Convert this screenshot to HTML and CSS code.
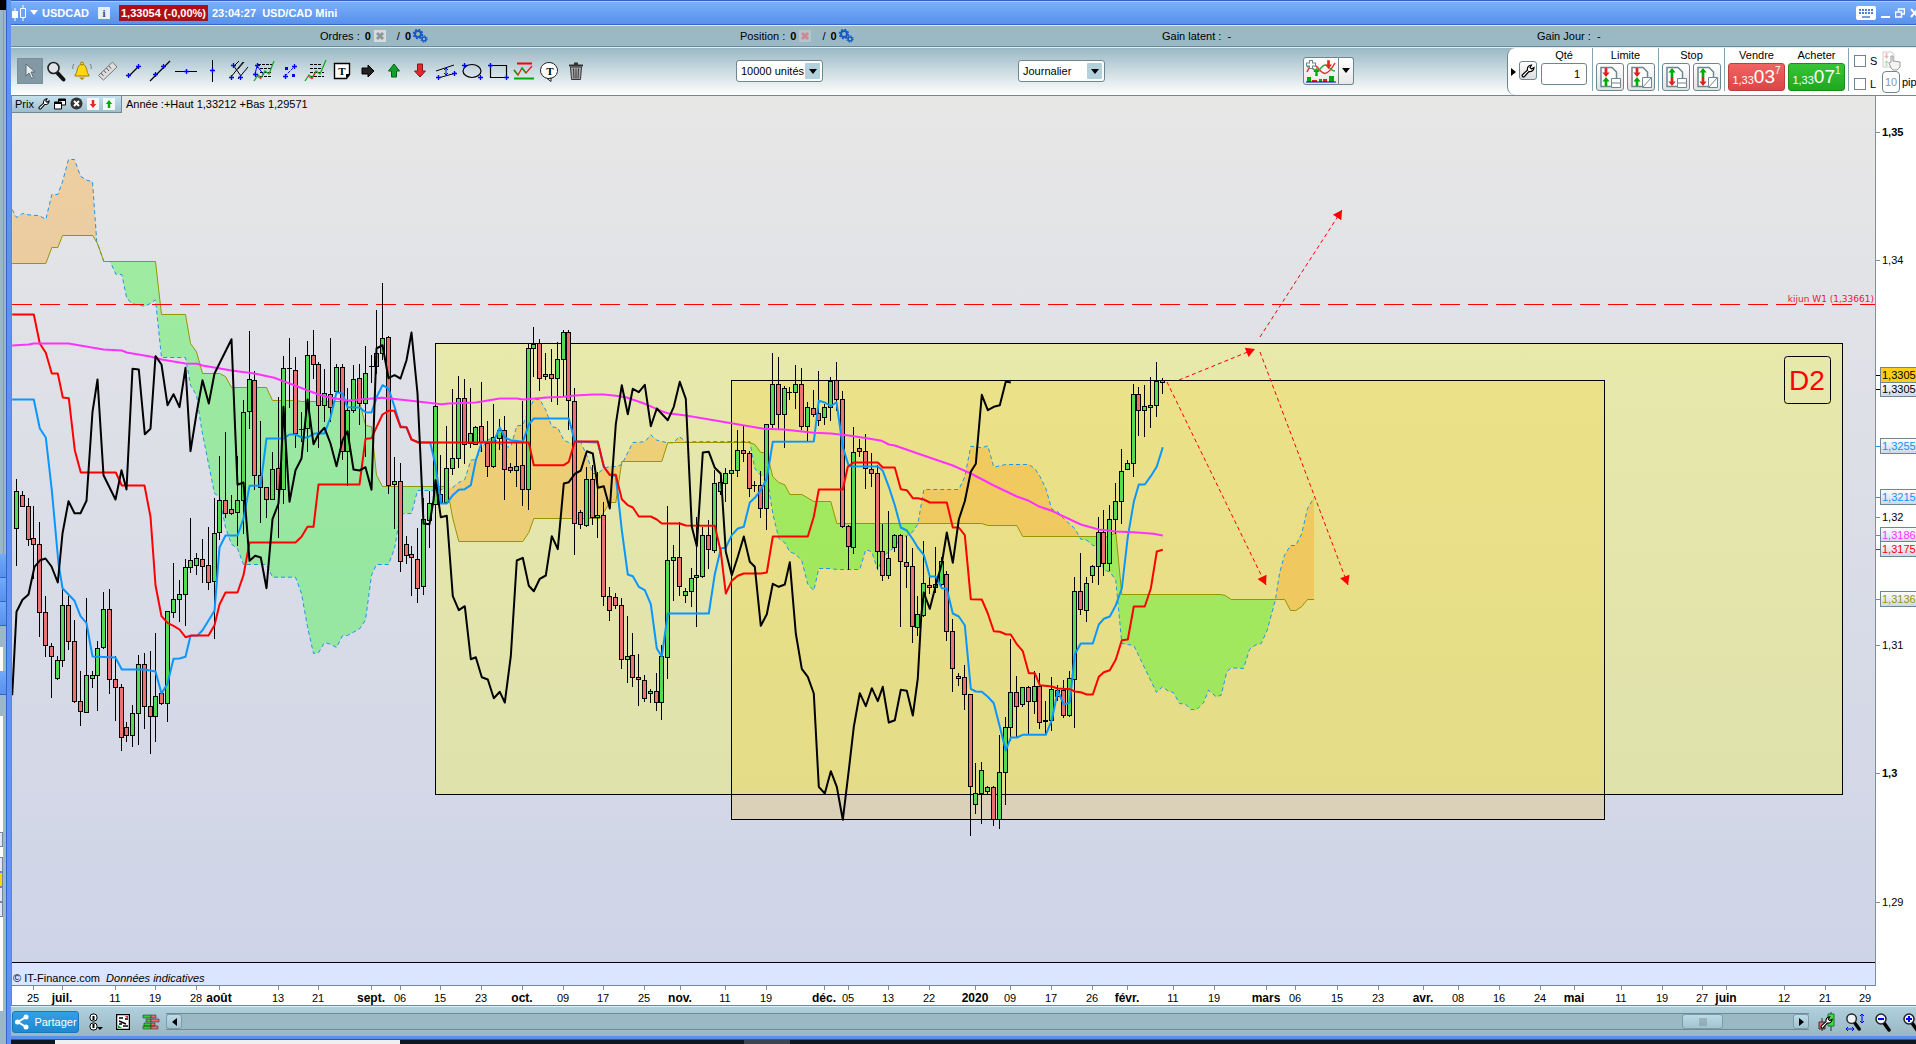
FILE: index.html
```html
<!DOCTYPE html>
<html lang="fr">
<head>
<meta charset="utf-8">
<title>USDCAD - USD/CAD Mini</title>
<link rel="stylesheet" href="styles.css">
</head>
<body>
<svg class="defs" aria-hidden="true">
  <symbol id="plus" viewBox="0 0 6 6"><path d="M3 0V6M0 3H6" stroke="#00f" stroke-width="1.600"/></symbol>
  <symbol id="gears" viewBox="0 0 16 14">
    <circle cx="6" cy="5" r="3" fill="none" stroke="#1557c4" stroke-width="2"/>
    <circle cx="6" cy="5" r="4.5" fill="none" stroke="#1557c4" stroke-width="1.5" stroke-dasharray="2 1.5"/>
    <circle cx="12" cy="10" r="2" fill="none" stroke="#1557c4" stroke-width="1.6"/>
    <circle cx="12" cy="10" r="3.2" fill="none" stroke="#1557c4" stroke-dasharray="1.4 1.1"/>
  </symbol>
  <symbol id="wrench" viewBox="0 0 14 14"><path d="M1.5 12.5c-1-1 0-1.800 0-1.800L6.500 6C6 3.500 7.500 1 10.500 1L9 3.500 10.500 5 13 3.500C13 6.500 10.500 8 8 7.500L3.500 12.500c0 0-1 1-2 0Z" fill="#fff" stroke="#000" stroke-width="1.200"/></symbol>
  <symbol id="page" viewBox="0 0 24 24"><path d="M3 2.500H14L18.500 7V21.500H3Z" fill="#fff" stroke="#6d868f" stroke-width="1.500"/></symbol>
  <symbol id="down" viewBox="0 0 8 10"><path d="M2.500 0h3v5H8L4 10 0 5h2.500Z"/></symbol>
  <symbol id="up" viewBox="0 0 8 10"><path d="M2.500 10h3V5H8L4 0 0 5h2.500Z"/></symbol>
  <symbol id="lens" viewBox="0 0 18 20"><path d="M10 11l5 7" stroke="#000" stroke-width="3.500" stroke-linecap="round"/><circle cx="7" cy="7" r="5" fill="#eef3f5" stroke="#222" stroke-width="1.500"/></symbol>
</svg>

<div class="screen">
  <aside class="neighbour">
    <i class="n-black"></i><i class="n-top"></i><i class="n-blue"></i><i class="n-blue"></i><i class="n-blue"></i>
    <i class="n-gap"></i><i class="n-white"></i><i class="n-blue"></i><i class="n-gap"></i><i class="n-long"></i>
    <i class="n-tag"></i><i class="n-space"></i><i class="n-tag"></i><i class="n-tag n-gold"></i><i class="n-tag"></i><i class="n-tag"></i><i class="n-end"></i>
  </aside>

  <main class="window">
    <header class="titlebar">
      <svg class="ico-candles" width="16" height="18" viewBox="0 0 16 18"><path d="M4 4v13M12 1v16" stroke="#fff"/><path d="M1 7h6v7H1z" fill="#fff"/><path d="M9.500 4.500h5v9h-5z" fill="#6ba3f8" stroke="#fff"/></svg>
      <svg width="8" height="5" viewBox="0 0 8 5"><path d="M0 0h8L4 5z" fill="#fff"/></svg>
      <h1>USDCAD</h1>
      <button class="info" aria-label="Informations">i</button>
      <span class="quote">1,33054 (-0,00%)</span>
      <span class="clock">23:04:27&nbsp; USD/CAD Mini</span>
      <span class="wincontrols">
        <button aria-label="Clavier"><svg width="20" height="14" viewBox="0 0 20 14"><rect width="20" height="14" rx="2" fill="#fff"/><path d="M3 4h14M3 7h14" stroke="#4a7fd8" stroke-width="2" stroke-dasharray="2 1"/><path d="M6 11h8" stroke="#4a7fd8" stroke-width="1.500"/></svg></button>
        <button aria-label="Réduire"><svg width="9" height="12" viewBox="0 0 9 12"><path d="M0 10h9" stroke="#fff" stroke-width="2"/></svg></button>
        <button aria-label="Restaurer"><svg width="10" height="12" viewBox="0 0 10 12"><path d="M3.500 4V2h6v5H7M.5 5h6v5h-6z" fill="none" stroke="#fff" stroke-width="1.500"/></svg></button>
        <button aria-label="Fermer"><svg width="9" height="10" viewBox="0 0 9 10"><path d="M1 1l7 8M8 1L1 9" stroke="#fff" stroke-width="2"/></svg></button>
      </span>
    </header>

    <section class="infobar">
      <div class="stat stat-first">Ordres : <b>0</b>
        <svg width="12" height="12" viewBox="0 0 12 12"><rect width="12" height="12" fill="#d4dcdf"/><path d="M3 3l6 6M9 3L3 9" stroke="#8f9698" stroke-width="3"/></svg>
        <span class="slash">/</span> <b>0</b><svg class="gears" width="16" height="14"><use href="#gears"/></svg></div>
      <div class="stat">Position : <b>0</b>
        <svg width="12" height="12" viewBox="0 0 12 12"><rect width="12" height="12" fill="#b5c5cd"/><path d="M3 3l6 6M9 3L3 9" stroke="#cf8790" stroke-width="3"/></svg>
        <span class="slash">/</span> <b>0</b><svg class="gears" width="16" height="14"><use href="#gears"/></svg></div>
      <div class="stat">Gain latent :&nbsp; -</div>
      <div class="stat">Gain Jour :&nbsp; -</div>
    </section>

    <section class="toolbar">
      <nav class="tools">
        <button class="active" aria-label="Pointeur"><svg width="24" height="24" viewBox="0 0 24 24"><path d="M8 5v12l3-3 2.500 5.500 2-1L13 13h4z" fill="#e8eef0" stroke="#5c6c73"/></svg></button>
        <button aria-label="Loupe"><svg width="24" height="24" viewBox="0 0 24 24"><path d="M13.500 14l6 6.500" stroke="#111" stroke-width="4" stroke-linecap="round"/><circle cx="9.500" cy="9" r="5.500" fill="#dfe5e8" stroke="#222" stroke-width="1.600"/></svg></button>
        <button aria-label="Alerte"><svg width="24" height="24" viewBox="0 0 24 24"><path d="M5 16c3-2 1-10 7-11 6 1 4 9 7 11v1H5z" fill="#ffd712" stroke="#a67a00"/><circle cx="12" cy="4.500" r="1.500" fill="#ffd712" stroke="#a67a00"/><path d="M9 18.500h6l-3 2.500z" fill="#b98500"/><path d="M4 5C2.500 7 2.500 8 3 10M20 5c1.500 2 1.500 3 1 5" stroke="#777" fill="none"/></svg></button>
        <button aria-label="Règle"><svg width="24" height="24" viewBox="0 0 24 24"><path d="M2.500 16.500L16.500 3l4.500 5L7.500 21z" fill="#ddd" stroke="#777"/><path d="M5 14l2.500 3M8 11.500l2 2.500M10.500 9l2.500 3M13 7l2 2.500" stroke="#555"/></svg></button>
        <button aria-label="Segment"><svg width="24" height="24" viewBox="0 0 24 24"><path d="M7 17l9-9" stroke="#000" stroke-width="1.300"/><use href="#plus" x="4" y="14" width="5" height="5"/><use href="#plus" x="14" y="5" width="5" height="5"/></svg></button>
        <button aria-label="Droite"><svg width="24" height="24" viewBox="0 0 24 24"><path d="M2 22L22 2" stroke="#000" stroke-width="1.300"/><use href="#plus" x="5" y="13" width="5" height="5"/><use href="#plus" x="13" y="5" width="5" height="5"/></svg></button>
        <button aria-label="Horizontale"><svg width="24" height="24" viewBox="0 0 24 24"><path d="M1 12.500h22" stroke="#000"/><use href="#plus" x="10" y="10" width="5" height="5"/></svg></button>
        <button aria-label="Verticale"><svg width="24" height="24" viewBox="0 0 24 24"><path d="M12.500 1v22" stroke="#000"/><use href="#plus" x="10" y="9" width="5" height="5"/></svg></button>
        <button aria-label="Fourchette"><svg width="24" height="24" viewBox="0 0 24 24"><path d="M5 18L17 3M12 20L22 8M7 8L13 2M7 6l8 11M12 10l6-7" stroke="#000"/><use href="#plus" x="5" y="4" width="5" height="5"/><use href="#plus" x="3" y="16" width="5" height="5"/><use href="#plus" x="12" y="16" width="5" height="5"/></svg></button>
        <button aria-label="Retracement"><svg width="24" height="24" viewBox="0 0 24 24"><path d="M6 5.500h14M8 9.500h12M8 13.500h12M8 17.500h12" stroke="#000" stroke-dasharray="3 1"/><path d="M3 15L5 7l7 9" stroke="#00f" fill="none"/><path d="M2 22l4-6 3 3 4-7 4 3 5-13" stroke="#15a825" stroke-width="1.300" fill="none"/><path d="M5 17l4 3" stroke="#e22"/><use href="#plus" x="1" y="13" width="5" height="5"/><use href="#plus" x="3" y="4" width="5" height="5"/></svg></button>
        <button aria-label="Projection"><svg width="24" height="24" viewBox="0 0 24 24"><path d="M7 17l9-9" stroke="#00f" stroke-dasharray="3 1"/><use href="#plus" x="5" y="15" width="5" height="5"/><use href="#plus" x="14" y="5" width="5" height="5"/><path d="M7 8h3v3H7zM14 15h3v3h-3z" fill="#00f"/></svg></button>
        <button aria-label="Extension"><svg width="24" height="24" viewBox="0 0 24 24"><path d="M6 5.500h12M6 9.500h12M6 13.500h14M6 17.500h14" stroke="#000" stroke-dasharray="3 1"/><path d="M1 22l4-6 3 3 4-7 4 3 6-14" stroke="#15a825" stroke-width="1.300" fill="none"/><path d="M4 17l4 3 4-7" stroke="#e22" fill="none"/></svg></button>
        <button aria-label="Texte"><svg width="24" height="24" viewBox="0 0 24 24"><path d="M4.500 4.500h15v11l-3 4h-12z" fill="#fff" stroke="#000" stroke-width="1.400"/><path d="M16 19v-4h4z"/><text x="12" y="16" class="glyph-t">T</text></svg></button>
        <button aria-label="Flèche droite"><svg width="24" height="24" viewBox="0 0 24 24"><path d="M6 9h6V6l6 6-6 6v-3H6z" fill="#222" stroke="#000"/></svg></button>
        <button aria-label="Flèche haut"><svg width="24" height="24" viewBox="0 0 24 24"><path d="M9.500 18v-6h-3L12 5l5.500 7h-3v6z" fill="#13a028" stroke="#075f14"/></svg></button>
        <button aria-label="Flèche bas"><svg width="24" height="24" viewBox="0 0 24 24"><path d="M9.500 5v7h-3l5.500 6 5.500-6h-3V5z" fill="#e0282d" stroke="#8b1619"/></svg></button>
        <button aria-label="Canal"><svg width="24" height="24" viewBox="0 0 24 24"><path d="M2 12L20 6M4 19l18-5" stroke="#000"/><path d="M12 9v6" stroke="#00f"/><path d="M10 11l2-2 2 2M10 14l2 2 2-2" stroke="#00f" fill="none"/><use href="#plus" x="2" y="16" width="5" height="5"/><use href="#plus" x="18" y="12" width="5" height="5"/></svg></button>
        <button aria-label="Ellipse"><svg width="24" height="24" viewBox="0 0 24 24"><ellipse cx="12" cy="12" rx="9" ry="6.500" fill="none" stroke="#000" stroke-width="1.200"/><use href="#plus" x="2" y="4" width="5" height="5"/><use href="#plus" x="18" y="16" width="5" height="5"/></svg></button>
        <button aria-label="Rectangle"><svg width="24" height="24" viewBox="0 0 24 24"><path d="M4.500 6.500h16v12h-16z" fill="none" stroke="#000" stroke-width="1.200"/><use href="#plus" x="2" y="4" width="5" height="5"/><use href="#plus" x="18" y="16" width="5" height="5"/></svg></button>
        <button aria-label="Bornes"><svg width="24" height="24" viewBox="0 0 24 24"><path d="M5 4.500h15" stroke="#f00" stroke-width="2"/><path d="M2 19.500h20" stroke="#0a0" stroke-width="2"/><path d="M2 11l4 5 4-7 4 5 6-7" stroke="#d22" stroke-width="1.300" fill="none"/><path d="M2 11l4 5M10 9l4 5" stroke="#0a0" stroke-width="1.300"/></svg></button>
        <button aria-label="Bulle"><svg width="24" height="24" viewBox="0 0 24 24"><path d="M12 3.500a8.500 8 0 1 1-2 16M10 19.500a8.500 8 0 0 1 2-16M9 19.500l4 3v-4" fill="#fff" stroke="#222"/><text x="12" y="16" class="glyph-t">T</text></svg></button>
        <button aria-label="Corbeille"><svg width="24" height="24" viewBox="0 0 24 24"><path d="M6.500 8h11l-1 12.500h-9z" fill="#aaa" stroke="#333"/><path d="M9.500 9.500l.5 10M12 9.500v10M14.500 9.500l-.5 10" stroke="#333"/><path d="M5 6.500h14M10 4.500h4" stroke="#333" stroke-width="2"/></svg></button>
      </nav>
      <div class="cell"><label class="combo"><select aria-label="Nombre d'unités"><option>10000 unités</option></select><svg width="15" height="16" viewBox="0 0 15 16"><rect width="15" height="16" rx="1" fill="#b3d1dc"/><path d="M4 6h8l-4 5z"/></svg></label></div>
      <div class="cell"><label class="combo"><select aria-label="Unité de temps"><option>Journalier</option></select><svg width="15" height="16" viewBox="0 0 15 16"><rect width="15" height="16" rx="1" fill="#b3d1dc"/><path d="M4 6h8l-4 5z"/></svg></label></div>
      <div class="cell">
        <button class="indicator" aria-label="Indicateurs"><svg width="32" height="24" viewBox="0 0 32 24"><path d="M2 13C6 4 9 4 13 9s8 11 17-5" fill="none" stroke="#d33" stroke-width="1.500"/><path d="M2 8c5-3 8 9 14 1s8 3 14 3" fill="none" stroke="#3a4" stroke-width="1.500"/><path d="M6 1v9M1 5.500h10" stroke="#6d868f" stroke-width="4"/><path d="M6 2v7M2 5.500h8" stroke="#fff" stroke-width="2"/><use href="#down" x="20" y="1" width="7" height="9" fill="#e22"/><use href="#up" x="8" y="9" width="7" height="8" fill="#0a0"/><path d="M2 23v-5h4v5M14 23v-3h3v3M24 23v-6h5v6" fill="#0a0"/><path d="M7 23v-2h5v2M18 23v-3h4v3" fill="#d22"/><path d="M1 23h30" stroke="#00c"/></svg></button><button class="indicator-more" aria-label="Plus d'indicateurs"><svg width="8" height="5" viewBox="0 0 8 5"><path d="M0 0h8L4 5z"/></svg></button>
      </div>
      <form class="order">
        <button type="button" class="fold" aria-label="Replier"><svg width="5" height="8" viewBox="0 0 5 8"><path d="M0 0l5 4-5 4z"/></svg></button>
        <button type="button" class="sq" aria-label="Réglages"><svg width="14" height="14"><use href="#wrench"/></svg></button>
        <div class="field qty"><label for="qty">Qté</label><input id="qty" value="1"></div>
        <div class="field pair"><span>Limite</span><div>
          <button type="button" aria-label="Limite achat"><svg width="24" height="24"><use href="#page" width="24" height="24"/><use href="#down" x="4" y="3" width="8" height="9" fill="#d22"/><use href="#up" x="4" y="12" width="8" height="9" fill="#0a0"/><path d="M13.500 13.500h9v9h-9zM14 18h8" fill="#fff" stroke="#6d868f"/></svg></button>
          <button type="button" aria-label="Limite oblique"><svg width="24" height="24"><use href="#page" width="24" height="24"/><use href="#down" x="4" y="3" width="8" height="9" fill="#d22"/><use href="#up" x="4" y="12" width="8" height="9" fill="#0a0"/><path d="M13.500 12.500h9v10h-9zM14 22l8-9" fill="#fff" stroke="#6d868f"/></svg></button></div></div>
        <div class="field pair"><span>Stop</span><div>
          <button type="button" aria-label="Stop achat"><svg width="24" height="24"><use href="#page" width="24" height="24"/><use href="#up" x="4" y="3" width="8" height="9" fill="#0a0"/><use href="#down" x="4" y="12" width="8" height="9" fill="#d22"/><path d="M13.500 13.500h9v9h-9zM14 18h8" fill="#fff" stroke="#6d868f"/></svg></button>
          <button type="button" aria-label="Stop oblique"><svg width="24" height="24"><use href="#page" width="24" height="24"/><use href="#up" x="4" y="3" width="8" height="9" fill="#0a0"/><use href="#down" x="4" y="12" width="8" height="9" fill="#d22"/><path d="M13.500 12.500h9v10h-9zM14 22l8-9" fill="#fff" stroke="#6d868f"/></svg></button></div></div>
        <div class="field deal"><span>Vendre</span><button type="button" class="sell">1,33<big>03</big><sup>7</sup></button></div>
        <div class="field deal last"><span>Acheter</span><button type="button" class="buy">1,33<big>07</big><sup>1</sup></button></div>
        <div class="checks"><label><input type="checkbox">S</label><label><input type="checkbox">L</label></div>
        <div class="pips">
          <svg width="20" height="20" viewBox="0 0 20 20"><path d="M1 1h9l2 3v12H1z" fill="#fff" stroke="#ccc"/><use href="#down" x="2" y="2" width="5" height="6" fill="#f5b5b5"/><use href="#up" x="2" y="9" width="5" height="6" fill="#b3e3b3"/><path d="M9 17l-2-5 2-1V5h2v5l7 1v5l-3 3h-4z" fill="#f4f4f4" stroke="#999"/></svg>
          <label><input value="10" aria-label="Distance en pips">pips</label>
        </div>
      </form>
    </section>

    <section class="chart">
      <div class="plot"><svg id="plot" viewBox="12 96 1863 866" preserveAspectRatio="xMinYMin slice"></svg>
        <div class="legend"><div class="legend-box">Prix
          <svg width="12" height="12"><use href="#wrench"/></svg>
          <svg width="12" height="12" viewBox="0 0 12 12"><path d="M4.500 1h7v6h-7z" fill="#fff" stroke="#000"/><path d="M4 1h8v2H4z"/><path d="M.5 4h7v7h-7z" fill="#fff" stroke="#000"/><path d="M0 4h8v2H0z"/></svg>
          <svg width="13" height="13" viewBox="0 0 13 13"><circle cx="6.500" cy="6.500" r="6" fill="#333"/><path d="M4 4l5 5M9 4L4 9" stroke="#fff" stroke-width="2"/></svg>
          <svg width="12" height="12" viewBox="0 0 12 12"><rect width="12" height="12" fill="#f2f8fa"/><use href="#down" x="2" y="2" width="8" height="8" fill="#e22"/></svg>
          <svg width="12" height="12" viewBox="0 0 12 12"><rect width="12" height="12" fill="#f2f8fa"/><use href="#up" x="2" y="2" width="8" height="8" fill="#0a0"/></svg>
        </div><span>Année :+Haut 1,33212 +Bas 1,29571</span></div>
      </div>
      <svg id="prices" class="prices" viewBox="1876 96 40 866" preserveAspectRatio="xMinYMin slice"></svg>
      <div class="source">© IT-Finance.com &nbsp;<em>Données indicatives</em></div>
      <svg id="dates" class="dates" viewBox="12 986 1904 19" preserveAspectRatio="xMinYMin slice"></svg>
    </section>

    <footer class="bottombar">
      <button class="share"><svg width="16" height="16" viewBox="0 0 16 16"><path d="M12 3L4 8l8 5" fill="none" stroke="#fff" stroke-width="2"/><circle cx="12" cy="3" r="2.500" fill="#fff"/><circle cx="3.500" cy="8" r="2.500" fill="#fff"/><circle cx="12" cy="13" r="2.500" fill="#fff"/></svg>Partager</button>
      <button class="flat link" aria-label="Lier"><svg width="16" height="18" viewBox="0 0 16 18"><rect x="3" y="1" width="7" height="7" rx="3" fill="#fff" stroke="#000"/><rect x="3" y="10" width="7" height="7" rx="3" fill="#fff" stroke="#000"/><path d="M6.500 3v4M6.500 11v4" stroke="#000" stroke-width="2"/><path d="M10 14h6l-3 3z"/></svg></button>
      <button class="flat" aria-label="Rapport"><svg width="14" height="16" viewBox="0 0 14 16"><rect x=".5" y=".5" width="13" height="15" fill="#fff" stroke="#000" stroke-width="1.500"/><path d="M3 4h4M9 5h3M3 7l7 3M3 10h3M7 12h5" stroke="#000" stroke-width="1.500"/><path d="M9 2h3v3z" fill="#e22"/><path d="M2 11v3h4z" fill="#0a0"/></svg></button>
      <button class="flat" aria-label="Carnet"><svg width="18" height="16" viewBox="0 0 18 16"><path d="M1 1h8v3H1zM4 5h5v3H4zM2 9h7v3H2zM1 12h8v3H1z" fill="#3c3" stroke="#333" stroke-width=".6"/><path d="M9 1h5v3H9zM9 5h8v3H9zM9 9h4v3H9zM9 12h7v3H9z" fill="#e66" stroke="#333" stroke-width=".6"/></svg></button>
      <div class="scroll">
        <button aria-label="Défiler à gauche"><svg width="5" height="8" viewBox="0 0 5 8"><path d="M5 0L0 4l5 4z"/></svg></button>
        <span class="rail"></span>
        <button class="thumb" aria-label="Position"><svg width="8" height="8" viewBox="0 0 8 8"><path d="M0 1h8M0 3h8M0 5h8M0 7h8" stroke="#6d868f" stroke-width=".8"/></svg></button>
        <span class="rail-end"></span>
        <button aria-label="Défiler à droite"><svg width="5" height="8" viewBox="0 0 5 8"><path d="M0 0l5 4-5 4z"/></svg></button>
      </div>
      <div class="zooms">
        <button class="flat" aria-label="Style"><svg width="18" height="20" viewBox="0 0 18 20"><path d="M4 6v13M13 0v19" stroke="#333"/><path d="M1 10h6v7H1z" fill="#e66" stroke="#333"/><path d="M10 2h6v12h-6z" fill="#4d4" stroke="#173"/><use href="#wrench" x="2" y="4" width="13" height="13"/></svg></button>
        <button class="flat" aria-label="Zoom libre"><svg width="20" height="20" viewBox="0 0 20 20"><use href="#lens" width="17" height="19"/><path d="M17 2v9M15 4l2-2 2 2M15 9l2 2 2-2M1 17h8M3 15l-2 2 2 2M7 15l2 2-2 2" stroke="#00f" fill="none"/></svg></button>
        <button class="flat" aria-label="Zoom arrière"><svg width="18" height="20" viewBox="0 0 18 20"><use href="#lens" width="18" height="20"/><path d="M4 7h6" stroke="#00f" stroke-width="2"/></svg></button>
        <button class="flat" aria-label="Zoom avant"><svg width="18" height="20" viewBox="0 0 18 20"><use href="#lens" width="18" height="20"/><path d="M4 7h6M7 4v6" stroke="#00f" stroke-width="2"/></svg></button>
      </div>
    </footer>
    <div class="frame-bottom"></div>
    <div class="taskbar"><i></i><i></i></div>
  </main>
</div>
<script src="chart.js"></script>
</body>
</html>
```
FILE: styles.css
```css
* { box-sizing: border-box; }
body { margin: 0; height: 100vh; overflow: hidden; background: #0b1620; font: 11px/14px "Liberation Sans", Arial, sans-serif; color: #000; }
button, input, select { font: inherit; color: inherit; margin: 0; padding: 0; }
button { display: flex; align-items: center; justify-content: center; border: 0; background: none; }
svg { display: block; flex: none; }
.defs { position: absolute; width: 0; height: 0; }
.screen { display: flex; height: 100%; }

.neighbour { flex: none; width: 7px; display: flex; flex-direction: column; background: #9ab9c5; border-right: 1px solid #2f66c4; }
.neighbour i { flex: none; height: 21px; }
.neighbour .n-black { height: 10px; background: #000; }
.neighbour .n-top { height: 544px; border-right: 1px solid #809ca8; margin-right: 2px; }
.neighbour .n-blue { height: 24px; background: linear-gradient(#72aafb, #588fec); border-bottom: 1px solid #2f66c4; }
.neighbour .n-white { height: 24px; background: #fff; margin-right: 3px; }
.neighbour .n-long { height: 116px; background: #fff; margin-right: 3px; }
.neighbour .n-space { height: 10px; background: #fff; margin-right: 3px; }
.neighbour .n-tag { height: 15px; background: #e1e5f5; border: 1px solid #6f8a96; border-left: 0; margin-right: 3px; }
.neighbour .n-gold { background: #ffd416; }
.neighbour .n-end { height: 94px; background: #fff; margin-right: 3px; }

.window { flex: 1; min-width: 0; display: flex; flex-direction: column; border-left: 4px solid #5c94ef; }
.titlebar { flex: none; height: 25px; display: flex; align-items: center; color: #fff; background: linear-gradient(#7ab1ff, #5990ea); border-top: 1px solid #2f62c0; border-bottom: 1px solid #3368cc; box-shadow: inset 0 1px #a3cdff; }
.titlebar h1 { margin: 0 0 0 4px; width: 56px; font: inherit; font-weight: bold; }
.clock { font-weight: bold; }
.ico-candles { margin-right: 3px; }
.info { width: 12px; height: 12px; background: #e8eef5; color: #445; font: bold 11px/12px "Liberation Serif", serif; }
.quote { margin: 0 4px 0 9px; height: 16px; padding: 0 1px; line-height: 14px; font-weight: bold; background: #b00d12; border: 1px solid #8f1a34; }
.wincontrols { margin-left: auto; display: flex; align-items: center; gap: 5px; margin-right: -3px; }

.infobar { flex: none; height: 22px; display: grid; grid-template-columns: 308fr 420fr 422fr 375fr 380fr; align-items: center; background: #9ab9c5; border-top: 1px solid #d7f0fc; border-bottom: 1px solid #6f8a96; }
.stat { display: flex; align-items: center; gap: 5px; padding-left: 1px; white-space: nowrap; }
.stat-first { grid-column: 2; }
.stat b + svg { margin-left: -2px; }
.stat b + .gears { margin-left: -4px; }
.slash { margin-left: 6px; }

.toolbar { flex: none; height: 49px; display: grid; grid-template-columns: 725fr 282fr 285fr 204fr 409px; align-items: center; background: linear-gradient(#9ab9c5, #fff); border-top: 1px solid #d7f0fc; border-bottom: 1px solid #6f8a96; }
.tools { display: flex; padding-left: 6px; margin-bottom: 2px; }
.tools button { width: 26px; height: 26px; }
.tools .active { background: #8299a3; border: 1px solid #76909c; }
.glyph-t { font: bold 11px "Liberation Serif", serif; text-anchor: middle; }
.cell { display: flex; margin-bottom: 2px; }
.combo { position: relative; display: block; }
.combo select { appearance: none; display: block; width: 87px; height: 22px; padding-left: 4px; background: #fff; border: 1px solid #6d868f; border-radius: 3px; }
.combo svg { position: absolute; right: 3px; top: 3px; }
.indicator, .indicator-more { height: 28px; border: 1px solid #6d868f; background: linear-gradient(#fff, #e8e8e8); }
.indicator { width: 36px; border-radius: 3px 0 0 3px; }
.indicator-more { width: 15px; border-left: 0; border-radius: 0 3px 3px 0; }

.order { height: 47px; display: flex; align-items: flex-start; background: #fff; border-left: 1px solid #6d868f; border-radius: 8px 0 0 8px; white-space: nowrap; overflow: hidden; }
.order > * { flex: none; }
.fold { width: 11px; height: 47px; }
.sq { width: 18px; height: 19px; margin-top: 13px; border: 1px solid #6d868f; border-radius: 3px; background: linear-gradient(#fff, #ddd); }
.field { height: 43px; padding: 0 3px; display: flex; flex-direction: column; align-items: center; gap: 1px; border-right: 1px solid #86a5b2; }
.field button { height: 28px; }
.qty { width: 56px; padding-left: 4px; align-items: flex-start; }
.qty label { width: 46px; text-align: center; }
.qty input { width: 46px; height: 22px; padding-right: 6px; text-align: right; border: 1px solid #6d868f; border-radius: 3px; }
.pair > div { display: flex; gap: 3px; }
.pair button { width: 28px; border: 1px solid #6d868f; border-radius: 3px; background: linear-gradient(#fff, #e2e2e2); }
.deal { padding: 0 0 0 3px; border: 0; }
.deal.last { padding-right: 3px; border-right: 1px solid #86a5b2; }
.deal button { width: 57px; align-items: flex-end; padding-bottom: 3px; color: #fff; border-radius: 3px; line-height: 14px; }
.deal big { font-size: 19px; line-height: 20px; }
.deal sup { align-self: flex-start; font-size: 10px; line-height: 14px; }
.sell { background: linear-gradient(#f06464, #dc4545); border: 1px solid #bb3f3f; }
.buy { background: linear-gradient(#37c337, #1fa81f); border: 1px solid #198d19; }
.checks { margin: 6px 0 0 5px; width: 28px; display: flex; flex-direction: column; gap: 9px; }
.checks label { display: flex; align-items: center; gap: 4px; }
.checks input { appearance: none; width: 12px; height: 12px; border: 1px solid #6d868f; background: #fff; }
.pips { display: flex; flex-direction: column; margin-top: 3px; }
.pips label { display: flex; align-items: center; gap: 2px; }
.pips input { width: 18px; height: 22px; text-align: center; color: #8d9598; border: 1px solid #6d868f; border-radius: 4px; }

.chart { flex: 1; min-height: 0; display: grid; grid-template-columns: minmax(0, 1fr) 41px; grid-template-rows: minmax(0, 1fr) 24px 20px; background: #fff; border-left: 1px solid #6f8a96; }
.plot { position: relative; min-height: 0; background: linear-gradient(#e7e7e6, #e1e2e7 25%, #ced4e7); overflow: hidden; }
.plot > svg { width: 100%; height: 100%; }
.prices { width: 100%; height: 100%; border-left: 1px solid #7d929b; }
.source { grid-column: 1; padding-left: 1px; line-height: 30px; border-top: 1px solid #000; border-bottom: 1px solid #6f8a96; background: #dbe5ff; box-shadow: 1px 0 #7d929b; }
.dates { grid-column: 1 / 3; width: 100%; height: 20px; border-bottom: 1px solid #6f8a96; }
.legend { position: absolute; left: 0; top: 0; display: flex; align-items: center; gap: 4px; line-height: 12px; }
.legend span { padding-bottom: 2px; }
.legend-box { display: flex; align-items: center; gap: 4px; width: 110px; height: 17px; padding: 0 0 1px 3px; background: linear-gradient(#c5e2ee, #9fbecb); border: solid #6f8a96; border-width: 0 1px 1px 0; }

.bottombar { flex: none; height: 30px; display: flex; align-items: center; background: linear-gradient(#b0d0de, #9ab6c2); border-top: 1px solid #d7f0fc; }
.share { width: 67px; height: 22px; margin-left: 1px; gap: 4px; color: #fff; background: linear-gradient(#32a0e6, #1e88d0); border: 1px solid #1a76b8; border-radius: 3px; }
.flat { width: 28px; height: 22px; }
.link { margin-left: 2px; }
.scroll { flex: 1; display: flex; align-items: stretch; height: 17px; margin: 0 4px 0 1px; background: #9ab9c5; border: solid #6f8a96; border-width: 1px 0; }
.scroll button { width: 16px; background: linear-gradient(#bcdbe8, #a2c2cf); border: 1px solid #7d9ba8; border-radius: 3px; }
.scroll .thumb { width: 41px; }
.rail { flex: 1502; }
.rail-end { flex: 70; }
.zooms { display: flex; width: 103px; overflow: hidden; }
.zooms .flat { flex: none; }
.frame-bottom { flex: none; height: 4px; background: #5990ea; border-bottom: 1px solid #2c58ae; }
.taskbar { flex: none; height: 4px; display: flex; background: #0d1822; }
.taskbar i { width: 345px; margin-left: 44px; background: #f0f0f0; }
.taskbar i + i { width: 46px; margin-left: 344px; background: #3c4652; }

.tick { stroke: #7d929b; }
.label { font: 11px "Liberation Sans", Arial, sans-serif; }
.price-major { font-weight: bold; }
.month { font: bold 12px "Liberation Sans", Arial, sans-serif; }
.middle { text-anchor: middle; }
.span-up { fill: rgba(255, 153, 0, .3); }
.span-down { fill: rgba(0, 255, 0, .3); }
.zone-outer { fill: rgba(255, 255, 0, .26); stroke: #000; }
.zone-inner { fill: rgba(255, 180, 0, .2); stroke: #000; }
.line { fill: none; stroke-linejoin: round; stroke-width: 2; }
.chikou { stroke: #000; }
.kijun { stroke: #f00; }
.tenkan { stroke: #0a96ff; }
.average { stroke: #ff32ff; }
.span-a { stroke: #1e96e6; stroke-width: 1; stroke-dasharray: 4 3; }
.span-b { stroke: #969600; stroke-width: 1; }
.weekly { fill: none; stroke: #f00; stroke-dasharray: 20 8; shape-rendering: crispEdges; }
.weekly-label { font: 9px "DejaVu Sans", sans-serif; fill: #f01432; text-anchor: end; }
.zone-badge { fill: none; stroke: #000; }
.zone-name { font: 28px "Liberation Sans", Arial, sans-serif; fill: #f00; text-anchor: middle; }
.scenario { stroke: #f00; stroke-dasharray: 4 3; fill: none; }
.head { fill: #f00; }
```
FILE: chart.js
```js
const NS = 'http://www.w3.org/2000/svg';
function add(parent, tag, attrs, text) {
  const el = document.createElementNS(NS, tag);
  for (const k in attrs) el.setAttribute(k, attrs[k]);
  if (text) el.textContent = text;
  parent.appendChild(el);
  return el;
}

// The series are stored in tiles: each tile has its own origin and a unit of a third of a pixel.
const TILE = { a: [0, 130], b: [0, 440], c: [430, 300], d: [730, 330], e: [1130, 200] };
function points(src) {
  const out = [];
  let origin;
  for (const word of src.trim().split(/\s+/)) {
    if (TILE[word]) { origin = TILE[word]; continue; }
    const [x, y] = word.split(',').map(Number);
    out.push(((x + .5) / 3 + origin[0]).toFixed(1) + ',' + ((y + .5) / 3 + origin[1]).toFixed(1));
  }
  return out;
}

const kijun = points(`a 36,553 101,553 119,640 137,668 155,730 173,730 188,802 206,804 224,960
b 242,97 347,97 365,136 433,136 451,230 466,435 484,528 502,548 520,557 538,568 556,591 574,586 625,586 643,555 658,493 676,457 712,457 730,405 748,307 886,307 904,290 922,260 940,260 955,133 1078,133
a 1096,926 1114,924 1132,885 1147,853 1165,842 1183,842 1201,891 1219,891 1234,928 1255,937
c 16,427 296,427 311,495 401,495 416,485 434,424 503,424 521,500 539,524 557,524 575,597 593,615 608,622 626,649 662,649 680,658 695,670 749,670 767,676 854,677 872,755 887,880 905,842 923,827 941,820 992,820 1010,817 1028,709 1133,709 1151,650 1166,568 1238,568 1253,500 1270,487 1343,487
d 458,412 494,412 512,477 530,480 548,504 563,504 581,508 599,517 650,517 668,592 686,592 704,615 722,807 755,808 773,850 791,903 809,905 827,912 842,913 860,942 878,963 896,1029 914,1029 929,1065 965,1069 983,1075 1019,1077 1034,1084 1052,1086 1070,1093 1088,1093 1106,1040 1121,1026 1139,1020 1157,988 1175,930 1193,928 1211,829 1244,829 1262,775 1280,664 1298,659`);

const tenkan = points(`a 36,808 101,808 119,895 137,922
b 155,150 175,370 187,444 223,482 241,528 259,549 277,649 346,652 365,688 433,688 466,694 484,760 502,730 520,656 538,655 556,650 571,587 592,586 607,570 643,512 658,322 676,286 712,286 730,235 748,137 781,137
a 799,925 850,925 868,913 886,913 904,922 922,922 940,911 955,909 973,910 991,862 1009,786 1027,790 1042,831 1078,832 1096,846 1114,847 1132,795 1147,765 1165,775 1183,830 1201,888 1219,892 1234,928 1255,937 1290,937
c 16,495 32,610 50,610 68,585 86,569 104,567 122,555 137,480 155,425 191,424 209,382 224,412 242,420 278,425 296,373 311,355 416,355 434,424 503,427 521,498 539,525 557,527 575,690 593,823 608,828 626,860 644,870 662,912 680,1045 695,1069 713,940 836,940 854,822 872,745 887,742 905,705 923,685 941,680 959,607 974,593 992,570 1010,535 1028,425 1151,424 1166,302 1184,307 1202,318 1219,306 1238,440 1256,498 1343,499
d 458,422 476,470 494,525 512,592 530,601 548,627 563,652 581,674 599,739 617,739 635,774 650,776 668,850 686,859 704,885 722,1076 737,1084 755,1085 773,1100 791,1119 809,1190 827,1261 842,1222 860,1222 878,1214 947,1214 965,1170 983,1082 1001,1123 1019,1117 1034,972 1052,940 1088,940 1106,883 1121,866 1139,859 1157,825 1175,775 1193,620 1211,515 1226,463 1244,463 1262,438 1280,409 1298,351`);

const average = points(`a 36,646 85,643 101,640 205,640 310,658 365,661 380,667 450,679 484,688 556,700 590,701 607,706 694,721 763,730 822,743 886,767 955,793 991,803 1045,811 1078,808 1147,803 1219,810
c 35,312 55,310 137,307 209,295 260,295 280,298 350,292 401,290 434,286 488,283 520,283 557,287 590,292 644,311 695,333 713,339 767,346 860,362 1000,386 1060,388 1151,398 1202,400 1256,406 1310,414 1355,422
d 476,343 494,346 563,370 668,406 722,430 791,466 860,499 896,512 929,530 965,542 1052,583 1106,598 1157,604 1211,606 1270,611 1298,616`);

const chikou = points(`b 36,765 49,515 67,479 85,463 103,380 120,360 136,355 154,379 173,427 187,280 205,183 223,219 241,219 259,182
a 277,845 292,748
b 310,105 346,178 364,90 379,148
a 397,716 416,718 434,912 451,896 466,678 484,703 502,825 520,792 538,831 556,713 571,963 589,850 607,750 626,820 643,730 694,627 705,900 712,1064
b 730,127 748,362 765,347 782,352 799,444 817,237 835,190 843,60
a 850,830 868,1115 886,1020 904,985 922,808 940,942 955,912 973,893 991,940 1009,1008 1027,930 1042,903 1060,1018 1078,1021 1096,1011 1114,1079 1129,655 1147,645 1165,744 1183,735 1201,745 1219,690 1234,607 1252,790 1262,1000 1270,1180 1288,1182 1300,1110
c 16,540 32,651 50,647 68,888 86,930 104,918 122,1077 137,1071 155,1131 173,1138 191,1194 209,1175 224,1207 242,1068 260,781 278,773 296,857 311,873 329,836 347,826 365,708 383,747 401,550 416,546 434,521 452,511 470,453 488,460 503,563 521,558 539,625 557,372 575,255 593,342 608,266 626,276 644,254 662,378 680,325 713,360 731,320 749,245 767,296 785,680 800,738 818,457 836,455 854,503 872,521 887,755 905,825 923,770 941,709 959,785 974,800 992,977 1010,942 1028,851 1046,860 1064,853 1079,786 1097,1000 1115,1106 1133,1130 1151,1180
d 266,1370 284,1390 302,1323 320,1370 338,1469 356,1320 371,1190 389,1089 407,1128 425,1074 443,1113 458,1070 476,1177 494,1170 512,1079 530,1082 548,1156 563,1045 573,860 581,787 599,836 617,765 635,700 650,607 668,698 686,568 704,513 722,425 737,401 755,194 773,240 791,230 809,225 827,154 842,157`);

const spanB = points(`a 36,400 137,400 155,352 173,352 187,316 278,316 293,342 311,394 466,394 484,553 556,553 571,640 589,665 607,730 658,730 676,739 694,772 799,772 817,811 886,811 904,814 1078,814 1096,885 1114,890 1129,1035 1147,1069
c 50,559 68,655 86,724 278,724 296,697 311,655 509,655 539,607 557,607 575,484 695,484 713,427 959,427 974,433 992,457 1010,458 1028,530 1046,547 1064,554 1079,583 1115,583 1151,604 1202,604 1220,670
d 755,580 773,586 860,586 878,619 1139,619 1157,606 1175,793
e 273,1183 285,1186 303,1198 464,1198 481,1231 497,1231 515,1219 532,1198 552,1198`);

const spanA = points(`a 36,238 49,262 67,250 85,254 119,257 137,268 155,193 173,193 187,155 205,88 223,88 241,138 259,150 277,154 290,335 311,394 330,394 347,432 365,433 380,505 397,521 433,528 451,520 466,509 484,682 556,682 571,765 589,795 605,900
b 643,160 658,170 676,262 694,312 712,325 730,373 799,373 817,411 886,411 904,460 922,560 940,640 955,638 973,607 991,612 1009,622 1027,587 1042,586 1078,566 1096,540 1114,405 1129,373 1165,373 1183,325 1201,221 1234,220 1252,151
c 16,571 68,562 86,547 104,538 122,480 137,478 155,445 173,418 191,414 209,430 224,440 242,440 260,377 278,375 296,330 311,298 329,298 347,330 365,380 383,383 401,420 416,427 452,427 470,465 488,520 503,520 521,505 539,499 560,499 575,493 608,427 644,425 662,404 680,420 713,428 731,428 747,409 767,425 959,424 974,505 992,525 1010,530 1028,640 1046,715 1064,728 1079,755 1097,762 1115,782 1133,852 1151,871 1166,805 1200,805 1220,808 1289,808 1307,748 1325,755 1343,810
d 458,680 476,665 494,650 512,620 530,617 548,605 563,582 581,478 686,478 704,440 722,348 755,353 773,347 791,411 827,403 896,403 914,415 930,440 947,475 965,537 983,545 1000,565 1034,595 1052,627 1070,630 1088,646 1106,647 1121,720 1139,725 1157,750 1175,940 1211,946
e 79,1477 97,1460 115,1473 130,1477 148,1510 166,1512 182,1528 200,1528 220,1508 235,1470 258,1490 273,1485 290,1415 303,1403 340,1405 358,1348 375,1335 393,1330 411,1290 426,1235 436,1198 448,1120 463,1065 481,1036 497,1036 515,1000 532,925 552,892`);

// x, high, body top, body bottom, low, direction (g up, r down, k unchanged)
const candles = `b 49,118,153,267,378,g 67,153,165,200,200,r 85,173,198,299,318,r 100,198,295,314,416,r 118,246,313,518,590,r 136,468,517,617,651,r 154,609,618,650,774,r 172,648,660,717,720,g 187,440,495,662,681,g 205,468,495,605,630,r 223,540,603,786,789,r 241,693,783,816,858,r 259,474,705,819,819,g 277,693,705,717,744,g 292,603,624,708,813,g 310,456,507,624,627,g 328,447,507,719,762,r 346,648,717,744,843,r 364,732,741,893,933,r 379,846,861,888,906,r 397,795,819,888,921,g 415,645,672,822,915,g 433,639,672,801,867,r 451,633,798,830,942,r 466,579,768,830,906,g 484,759,759,792,795,r 502,513,513,792,846,g 520,369,477,519,534,g 538,420,462,480,546,g 556,357,381,464,558,g 571,234,360,384,399,g 589,339,354,378,405,g 607,297,357,380,429,r 625,261,375,429,450,r 643,174,279,426,597,g 658,48,180,279,300,g 676,-24,180,221,234,r 694,165,207,221,225,r 712,48,180,218,318,g 730,-120,-84,182,282,g 748,-327,-183,-84,-33,g 763,-207,-180,108,150,r 781,-57,105,143,249,r 799,140,141,180,234,r 817,36,87,180,180,g 835,-129,84,150,294,r 850,-252,-216,150,192,g
a 868,624,715,718,834,k 886,681,720,912,954,r 904,846,896,899,936,k 922,633,675,896,966,g 940,600,675,704,747,r 955,696,702,827,954,r 973,717,789,827,876,g 991,624,792,833,876,r 1009,702,711,786,792,g 1027,702,711,965,990,r 1042,774,840,966,1068,g 1060,705,747,842,849,g 1078,702,744,822,885,r 1096,648,729,822,981,g 1114,675,709,712,759,k 1129,540,669,710,732,g 1147,459,624,671,690,g 1165,618,621,1067,1092,r 1183,981,1053,1064,1197,g 1201,999,1053,1295,1326,r 1219,1218,1242,1277,1302,r 1234,1248,1272,1283,1398,r 1252,1194,1287,1376,1419,r 1270,1104,1167,1370,1395,g 1288,1083,1119,1172,1254,g
c 16,318,318,614,614,g 32,465,582,609,612,r 50,378,504,609,612,g 68,267,474,506,525,g 86,228,294,476,504,g 104,237,294,434,492,r 122,264,399,431,444,g 137,378,381,434,434,g 155,246,378,429,456,r 173,363,428,500,531,r 191,312,411,500,504,g 209,357,390,416,450,g 224,348,390,509,600,r 242,489,501,512,519,r 260,423,498,512,560,g 278,303,495,570,618,r 296,132,144,569,630,g 311,81,132,146,231,g 329,117,129,236,273,r 347,159,222,231,240,g 365,147,222,236,306,r 383,126,177,236,315,g 401,90,96,179,288,g 416,90,96,302,390,r 434,264,303,671,765,r 452,630,636,674,687,r 470,501,537,677,681,g 488,495,537,653,675,r 503,516,645,653,714,g 521,606,645,890,918,r 539,861,888,932,963,r 557,879,891,917,927,r 575,894,915,1079,1107,r 593,948,1068,1079,1149,g 608,999,1065,1133,1161,r 626,1062,1131,1139,1218,r 644,1125,1140,1196,1206,r 662,1167,1173,1181,1209,g 680,1119,1173,1208,1233,r 695,1035,1067,1208,1260,g 713,618,780,1074,1137,g 731,735,771,782,903,g 749,666,771,860,888,r 767,864,873,887,909,g 785,804,834,875,921,g 800,651,825,833,981,g 818,681,705,830,833,g 836,660,705,749,807,r 854,510,549,752,758,g 872,519,546,575,584,g 887,504,519,551,606,g 905,510,510,521,521,g 923,390,450,512,530,g 941,378,450,461,486,r 959,453,459,566,590,r 974,543,555,558,576,k
d 92,423,465,536,564,r 110,282,282,536,600,g 128,69,162,284,294,g 146,81,162,254,297,r 164,168,174,254,354,g 179,171,186,189,210,k 197,105,162,188,237,g 215,114,162,290,300,r 233,216,231,290,333,g 251,180,234,254,261,r 266,123,249,272,288,r 284,222,231,263,285,g 302,141,153,233,273,g 320,96,150,209,243,r 338,183,207,590,594,r 356,585,588,650,720,r 371,291,366,654,672,g 389,327,354,365,381,r 407,312,363,416,477,r 425,369,417,431,471,r 443,405,429,665,717,r 458,582,663,738,753,r 476,543,684,738,747,g 494,612,615,654,665,g 512,612,615,695,891,r 530,618,696,711,774,r 548,654,708,890,939,r 563,798,852,893,918,g 581,633,759,857,860,g 599,735,765,773,792,r 617,651,762,773,789,g 635,681,693,764,767,g 650,723,732,905,933,r 668,867,903,1016,1086,r 686,1029,1038,1046,1068,g 704,1005,1041,1094,1140,r 722,1092,1092,1370,1518,r 737,1299,1389,1424,1452,g 755,1296,1320,1391,1482,g 773,1368,1371,1385,1394,g 791,1368,1371,1469,1488,r 809,1215,1326,1469,1497,g 827,1161,1191,1328,1425,g 842,927,1086,1193,1232,g 860,1038,1086,1130,1221,r 878,1071,1071,1124,1131,g 896,1068,1071,1115,1212,r 914,1023,1068,1115,1152,g 929,1029,1068,1178,1197,r 947,1113,1170,1175,1212,k 965,1041,1077,1172,1203,g 983,1065,1080,1100,1113,g 1001,1050,1080,1157,1163,r 1019,1023,1044,1157,1161,g 1034,741,783,1049,1194,g 1052,669,783,839,855,r 1070,741,759,842,876,g 1088,705,708,738,759,g 1106,561,606,710,765,g 1121,540,606,701,738,r 1139,525,567,701,723,g 1157,459,513,569,612,g 1175,357,423,515,582,g 1193,390,399,420,420,g 1211,162,192,401,441,g 1226,171,192,242,318,r 1244,165,228,242,321,g 1262,141,225,234,294,g 1280,96,153,227,261,g 1298,144,150,158,192,r`;

const plot = document.getElementById('plot');
add(plot, 'rect', { x: 731.5, y: 380.5, width: 873, height: 439, class: 'zone-inner' });
add(plot, 'rect', { x: 435.5, y: 343.5, width: 1407, height: 451, class: 'zone-outer' });
add(plot, 'rect', { x: 731.5, y: 380.5, width: 873, height: 439, class: 'zone-badge' });

// Cloud: the part of one span that the other one leaves uncovered.
const area = (span, y) => '12,' + y + ' ' + span.join(' ') + ' 1314,' + y;
const defs = add(plot, 'defs', {});
add(add(defs, 'clipPath', { id: 'above-b' }), 'polygon', { points: area(spanB, 96) });
add(add(defs, 'clipPath', { id: 'below-b' }), 'polygon', { points: area(spanB, 962) });
add(plot, 'polygon', { points: area(spanA, 962), class: 'span-up', 'clip-path': 'url(#above-b)' });
add(plot, 'polygon', { points: area(spanA, 96), class: 'span-down', 'clip-path': 'url(#below-b)' });
add(plot, 'polyline', { points: spanA.join(' '), class: 'line span-a' });
add(plot, 'polyline', { points: spanB.join(' '), class: 'line span-b' });
add(plot, 'path', { d: 'M12 304.500H1875', class: 'weekly' });

const COLOURS = { g: '#55da55', r: '#ec7272', k: '#000' };
let origin;
for (const word of candles.trim().split(/\s+/)) {
  if (TILE[word]) { origin = TILE[word]; continue; }
  const c = word.split(',');
  const x = Math.floor(c[0] / 3) + origin[0];
  const [high, top, bottom, low] = c.slice(1, 5).map(v => Math.round(v / 3) + origin[1]);
  add(plot, 'rect', { x, y: high, width: 1, height: low - high });
  add(plot, 'rect', { x: x - 2, y: top, width: 5, height: Math.max(1, bottom - top) });
  if (bottom - top > 2) add(plot, 'rect', { x: x - 1, y: top + 1, width: 3, height: bottom - top - 2, fill: COLOURS[c[5]] });
}

add(plot, 'polyline', { points: tenkan.join(' '), class: 'line tenkan' });
add(plot, 'polyline', { points: kijun.join(' '), class: 'line kijun' });
add(plot, 'polyline', { points: average.join(' '), class: 'line average' });
add(plot, 'polyline', { points: chikou.join(' '), class: 'line chikou' });

for (const [x1, y1, x2, y2] of [[1179, 380, 1255, 349], [1260, 337, 1342, 210], [1167, 382, 1266, 585], [1260, 352, 1348, 585]]) {
  add(plot, 'path', { d: `M${x1} ${y1}L${x2} ${y2}`, class: 'scenario' });
  const angle = Math.atan2(y2 - y1, x2 - x1) * 180 / Math.PI;
  add(plot, 'path', { d: 'M0 0L-9 -5V5Z', class: 'head', transform: `translate(${x2} ${y2}) rotate(${angle})` });
}
add(plot, 'text', { x: 1874, y: 302, class: 'weekly-label' }, 'kijun W1 (1,33661)');
add(plot, 'rect', { x: 1784.5, y: 356.5, width: 46, height: 47, rx: 3, class: 'zone-badge' });
add(plot, 'text', { x: 1807, y: 390, class: 'zone-name' }, 'D2');

const prices = document.getElementById('prices');
const grad = add(add(prices, 'defs', {}), 'linearGradient', { id: 'tag', x2: 0, y2: 1 });
add(grad, 'stop', { offset: 0, 'stop-color': '#fff' });
add(grad, 'stop', { offset: 1, 'stop-color': '#ccd7ea' });
for (const [y, text, major] of [[132, '1,35', 1], [260, '1,34'], [517, '1,32'], [645, '1,31'], [773, '1,3', 1], [902, '1,29']]) {
  add(prices, 'path', { d: `M1876 ${y}.5h4`, class: 'tick' });
  add(prices, 'text', { x: 1882, y: y + 4, class: major ? 'label price-major' : 'label' }, text);
}
for (const [top, text, colour, fill] of [
  [381, '1,33054', '#000', 'url(#tag)'], [367, '1,33054', '#000', '#fccf16'], [438, '1,32555', '#0a96ff', 'url(#tag)'],
  [489, '1,32155', '#0a96ff', 'url(#tag)'], [527, '1,31865', '#ff32ff', 'url(#tag)'], [541, '1,31752', '#f00', 'url(#tag)'], [591, '1,31365', '#969600', 'url(#tag)']]) {
  add(prices, 'path', { d: `M1876 ${top + 8}.5h4`, stroke: colour });
  add(prices, 'rect', { x: 1880.5, y: top + .5, width: 50, height: 15, fill, stroke: '#6d868f' });
  add(prices, 'text', { x: 1882, y: top + 12, class: 'label', fill: colour }, text);
}

const dates = document.getElementById('dates');
for (const item of '33:25 62:juil. 115:11 155:19 196:28 219:août 278:13 318:21 371:sept. 400:06 440:15 481:23 522:oct. 563:09 603:17 644:25 680:nov. 725:11 766:19 824:déc. 848:05 888:13 929:22 975:2020 1010:09 1051:17 1092:26 1127:févr. 1173:11 1214:19 1266:mars 1295:06 1337:15 1378:23 1423:avr. 1458:08 1499:16 1540:24 1574:mai 1621:11 1662:19 1702:27 1726:juin 1784:12 1825:21 1865:29'.split(' ')) {
  const [x, text] = item.split(':');
  add(dates, 'path', { d: `M${x}.5 986v4`, class: 'tick' });
  add(dates, 'text', { x, y: 1002, class: /^\d\d$/.test(text) ? 'label middle' : 'month middle' }, text);
}
```
